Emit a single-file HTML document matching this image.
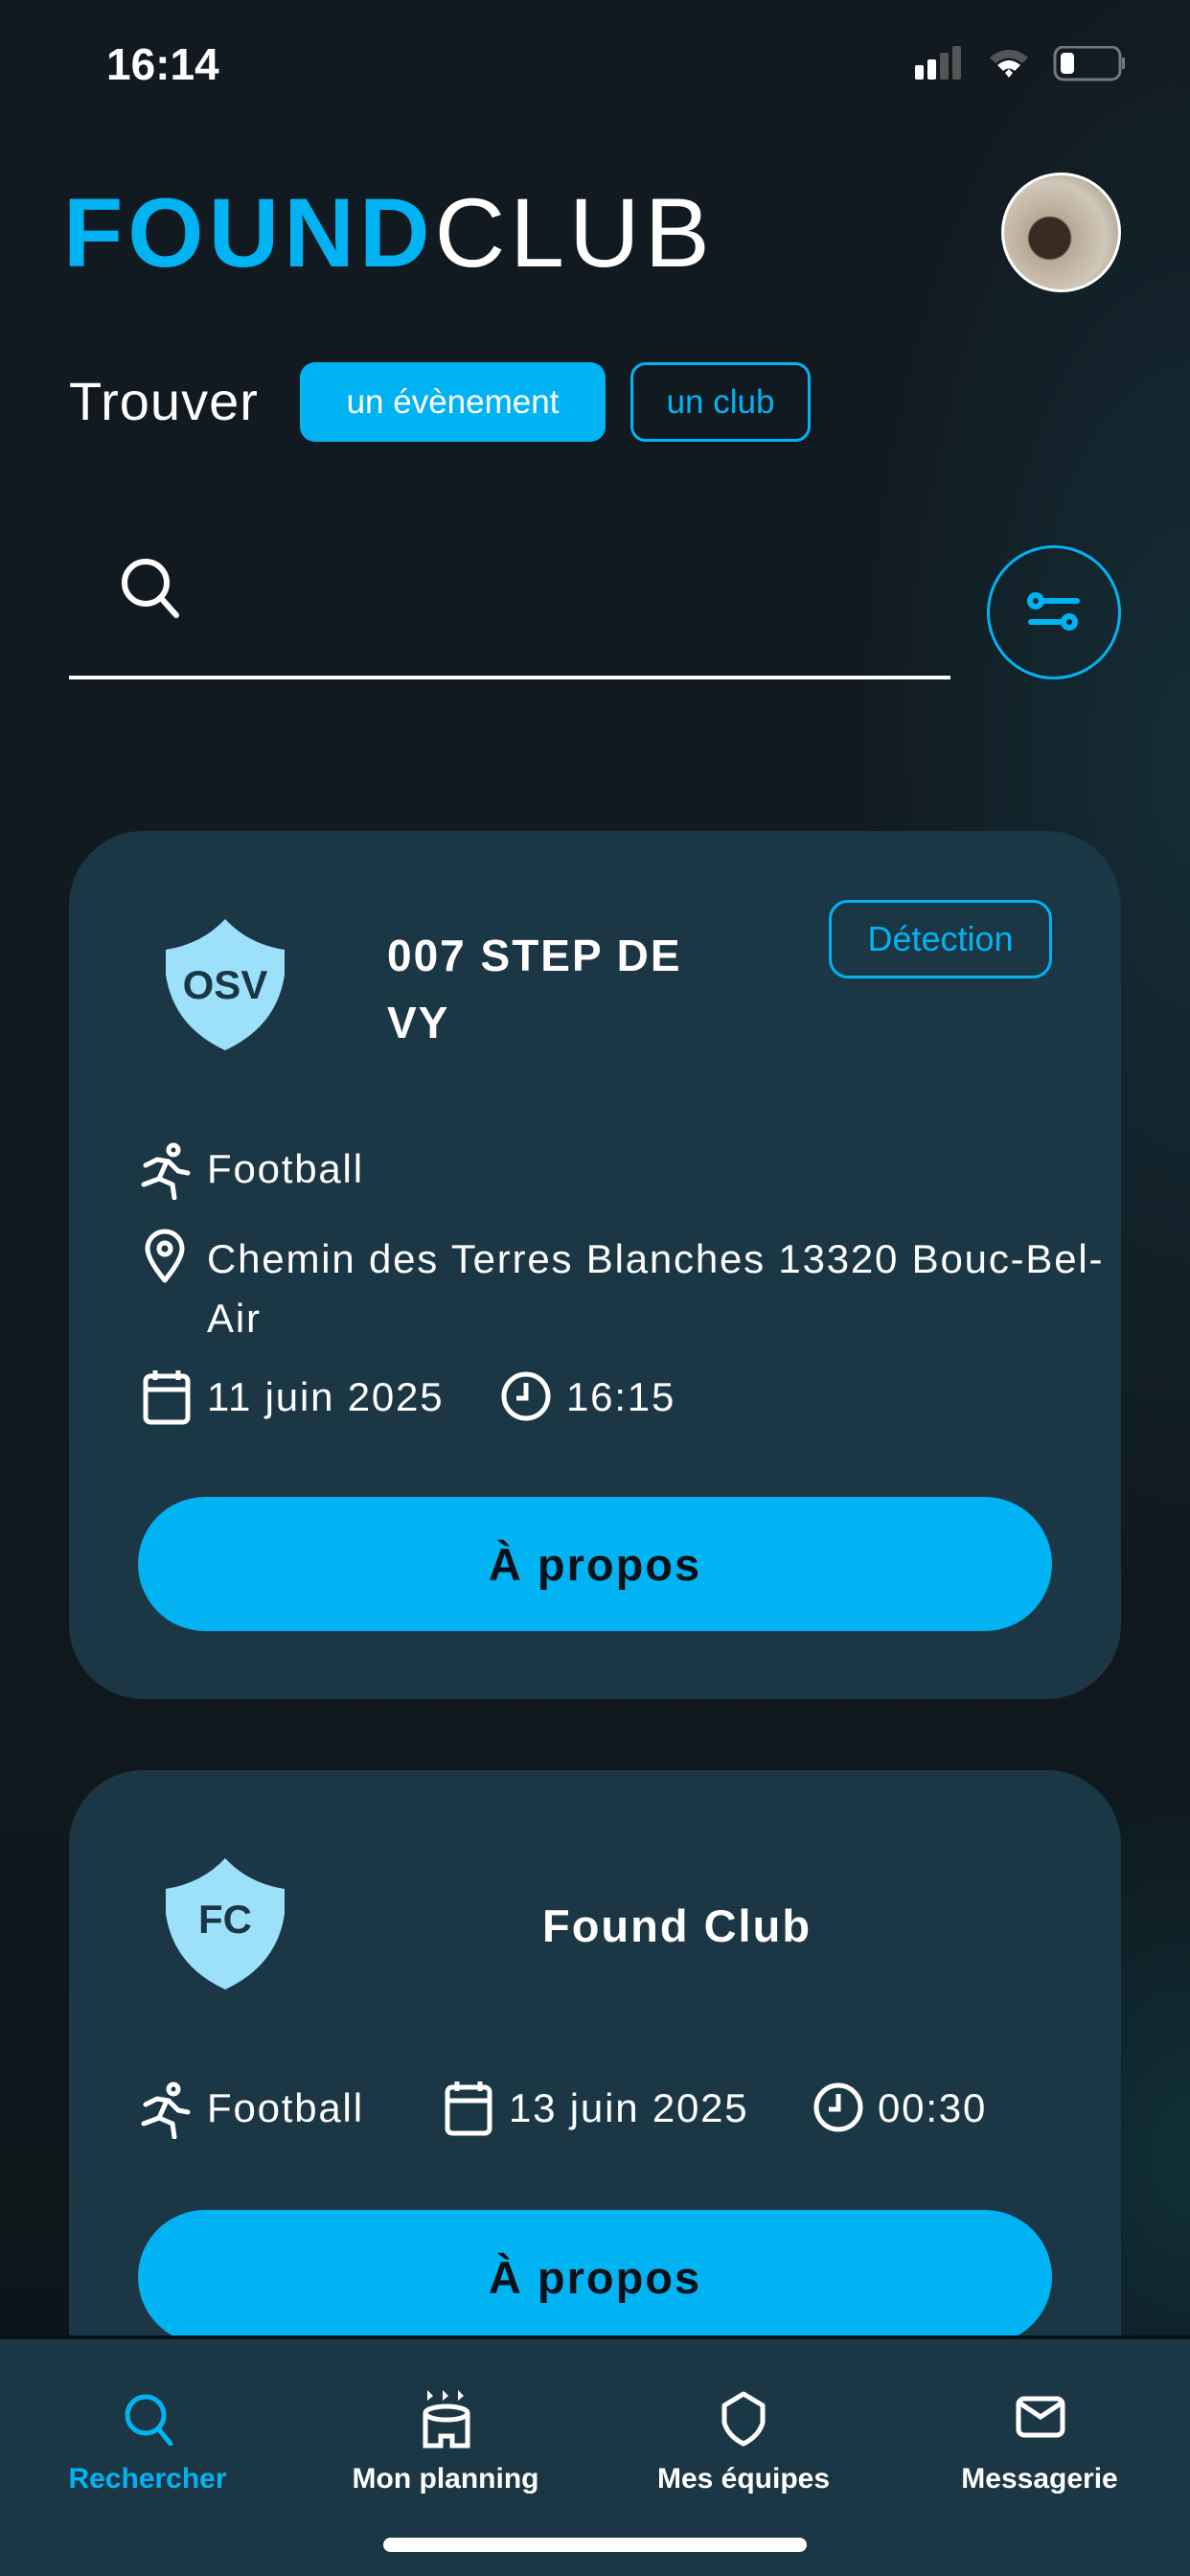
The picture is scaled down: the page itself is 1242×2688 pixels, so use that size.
<!DOCTYPE html>
<html><head><meta charset="utf-8">
<style>
*{margin:0;padding:0;box-sizing:border-box}
body{width:1242px;height:2688px;overflow:hidden;position:relative;font-family:"Liberation Sans",sans-serif;color:#fff;
background:radial-gradient(ellipse 500px 1200px at 1242px 800px,#142d36 0%,rgba(17,26,33,0) 70%),radial-gradient(ellipse 400px 600px at 1242px 2250px,#103038 0%,rgba(17,26,33,0) 70%),linear-gradient(180deg,#111a21 0%,#111a20 50%,#0c1418 100%);}
.a{position:absolute}
.card{position:absolute;left:72px;width:1098px;background:#1b3745;border-radius:78px}
.btn{position:absolute;left:72px;width:954px;height:140px;border-radius:70px;background:#02b3f3;color:#061018;font-weight:bold;font-size:47px;letter-spacing:2px;display:flex;align-items:center;justify-content:center}
.t42{font-size:42px;white-space:nowrap;letter-spacing:1.8px}
.tab{position:absolute;top:2570px;font-size:30px;font-weight:bold;width:300px;text-align:center;margin-left:-150px}
</style></head><body>
<div class="a" style="left:111px;top:40px;font-size:46px;font-weight:bold">16:14</div>
<svg class="a" style="left:955px;top:48px" width="220" height="40" viewBox="0 0 220 40">
<rect x="0" y="20" width="9" height="15" rx="2" fill="#fff"/><rect x="13" y="14" width="9" height="21" rx="2" fill="#fff"/><rect x="26" y="7" width="9" height="28" rx="2" fill="#555"/><rect x="39" y="0" width="9" height="35" rx="2" fill="#555"/>
<path d="M78 12 Q98 -4 118 12 L112 18 Q98 7 84 18Z" fill="#555"/><path d="M86 20 Q98 10 110 20 L104 26 Q98 21 92 26Z" fill="#fff"/><path d="M94 28 L98 24 L102 28 L98 33Z" fill="#fff"/>
<rect x="146" y="1" width="68" height="34" rx="9" fill="none" stroke="#777" stroke-width="3"/><rect x="152" y="7" width="14" height="22" rx="4" fill="#fff"/><rect x="216" y="12" width="3" height="12" rx="1" fill="#777"/>
</svg>
<div class="a" style="left:66px;top:188px;font-size:102px;line-height:110px;letter-spacing:5px;white-space:nowrap"><span style="color:#02b3f3;font-weight:bold">FOUND</span><span style="font-weight:normal">CLUB</span></div>
<div class="a" style="left:1045px;top:180px;width:125px;height:125px;border-radius:50%;border:3px solid #fff;background:radial-gradient(circle at 40% 55%,#3a2a22 0 22%,#b9a996 24%,#d0c7b7 60%,#8d8478 100%)"></div>
<div class="a" style="left:72px;top:386px;font-size:56px;letter-spacing:1px">Trouver</div>
<div class="a" style="left:313px;top:378px;width:319px;height:83px;border-radius:16px;background:#02b3f3;font-size:35px;display:flex;align-items:center;justify-content:center">un évènement</div>
<div class="a" style="left:658px;top:378px;width:188px;height:83px;border-radius:16px;border:3px solid #02b3f3;color:#02b3f3;font-size:35px;display:flex;align-items:center;justify-content:center">un club</div>
<svg class="a" style="left:122px;top:578px" width="70" height="70" viewBox="0 0 70 70"><circle cx="30" cy="30" r="22" fill="none" stroke="#fff" stroke-width="6"/><path d="M46 46 L62 64" stroke="#fff" stroke-width="6" stroke-linecap="round"/></svg>
<div class="a" style="left:72px;top:705px;width:920px;height:4px;background:#fff"></div>
<div class="a" style="left:1030px;top:569px;width:140px;height:140px;border-radius:50%;border:3px solid #02b3f3"></div>
<svg class="a" style="left:1072px;top:617px" width="56" height="46" viewBox="0 0 56 46"><g stroke="#02b3f3" stroke-width="6" fill="none" stroke-linecap="round"><circle cx="9" cy="10" r="6"/><path d="M16 10 H52"/><circle cx="44" cy="32" r="6"/><path d="M4 32 H37"/></g></svg>

<div class="card" style="top:867px;height:906px"></div>
<svg class="a" style="left:171px;top:959px" width="128" height="137" viewBox="0 0 128 137"><path d="M64 0 Q88 26 126 32 L126 58 Q118 112 64 137 Q10 112 2 58 L2 32 Q40 26 64 0Z" fill="#9de0fa"/><text x="64" y="83" text-anchor="middle" font-family="Liberation Sans" font-weight="bold" font-size="42" fill="#1b3745">OSV</text></svg>
<div class="a" style="left:404px;top:962px;font-size:46px;letter-spacing:2px;font-weight:bold;line-height:70px">007 STEP DE<br>VY</div>
<div class="a" style="left:865px;top:939px;width:233px;height:82px;border-radius:20px;border:3px solid #02b3f3;color:#02b3f3;font-size:36px;display:flex;align-items:center;justify-content:center">Détection</div>
<svg class="a" style="left:146px;top:1192px" width="54" height="60" viewBox="0 0 54 60"><g stroke="#fff" stroke-width="5" fill="none" stroke-linecap="round" stroke-linejoin="round"><circle cx="35" cy="8" r="5"/><path d="M6 24 L18 18 L30 20 L40 30 L50 32"/><path d="M28 20 L20 38 L4 44"/><path d="M20 38 L34 44 L36 58"/></g></svg>
<div class="a t42" style="left:216px;top:1196px">Football</div>
<svg class="a" style="left:150px;top:1282px" width="44" height="58" viewBox="0 0 44 58"><path d="M22 54 Q4 32 4 21 A18 18 0 0 1 40 21 Q40 32 22 54Z" fill="none" stroke="#fff" stroke-width="5" stroke-linejoin="round"/><circle cx="22" cy="21" r="6" fill="none" stroke="#fff" stroke-width="5"/></svg>
<div class="a t42" style="left:216px;top:1283px;line-height:62px">Chemin des Terres Blanches 13320 Bouc-Bel-<br>Air</div>
<svg class="a" style="left:148px;top:1428px" width="52" height="60" viewBox="0 0 52 60"><g stroke="#fff" stroke-width="5" fill="none"><rect x="4" y="8" width="44" height="48" rx="5"/><path d="M4 22 H48 M14 2 V12 M38 2 V12"/></g></svg>
<div class="a t42" style="left:216px;top:1434px">11 juin 2025</div>
<svg class="a" style="left:522px;top:1430px" width="54" height="54" viewBox="0 0 54 54"><circle cx="27" cy="27" r="23" fill="none" stroke="#fff" stroke-width="5"/><path d="M27 13 V29 H17" fill="none" stroke="#fff" stroke-width="5"/></svg>
<div class="a t42" style="left:591px;top:1434px">16:15</div>
<div class="btn" style="left:144px;top:1562px">À propos</div>

<div class="card" style="top:1847px;height:800px"></div>
<svg class="a" style="left:171px;top:1939px" width="128" height="137" viewBox="0 0 128 137"><path d="M64 0 Q88 26 126 32 L126 58 Q118 112 64 137 Q10 112 2 58 L2 32 Q40 26 64 0Z" fill="#9de0fa"/><text x="64" y="78" text-anchor="middle" font-family="Liberation Sans" font-weight="bold" font-size="42" fill="#1b3745">FC</text></svg>
<div class="a" style="left:566px;top:1982px;font-size:47px;letter-spacing:2px;font-weight:bold">Found Club</div>
<svg class="a" style="left:146px;top:2172px" width="54" height="60" viewBox="0 0 54 60"><g stroke="#fff" stroke-width="5" fill="none" stroke-linecap="round" stroke-linejoin="round"><circle cx="35" cy="8" r="5"/><path d="M6 24 L18 18 L30 20 L40 30 L50 32"/><path d="M28 20 L20 38 L4 44"/><path d="M20 38 L34 44 L36 58"/></g></svg>
<div class="a t42" style="left:216px;top:2176px">Football</div>
<svg class="a" style="left:463px;top:2170px" width="52" height="60" viewBox="0 0 52 60"><g stroke="#fff" stroke-width="5" fill="none"><rect x="4" y="8" width="44" height="48" rx="5"/><path d="M4 22 H48 M14 2 V12 M38 2 V12"/></g></svg>
<div class="a t42" style="left:531px;top:2176px">13 juin 2025</div>
<svg class="a" style="left:848px;top:2172px" width="54" height="54" viewBox="0 0 54 54"><circle cx="27" cy="27" r="23" fill="none" stroke="#fff" stroke-width="5"/><path d="M27 13 V29 H17" fill="none" stroke="#fff" stroke-width="5"/></svg>
<div class="a t42" style="left:916px;top:2176px">00:30</div>
<div class="btn" style="left:144px;top:2306px">À propos</div>

<div class="a" style="left:0;top:2437px;width:1242px;height:251px;background:#1b3745;border-top:4px solid #05121a"></div>
<svg class="a" style="left:128px;top:2496px" width="56" height="56" viewBox="0 0 56 56"><circle cx="24" cy="24" r="19" fill="none" stroke="#02b3f3" stroke-width="5"/><path d="M37 38 L50 54" stroke="#02b3f3" stroke-width="5" stroke-linecap="round"/></svg>
<svg class="a" style="left:436px;top:2492px" width="60" height="64" viewBox="0 0 60 64"><path d="M10 2 L16 8 L10 13Z M26 2 L32 8 L26 13Z M42 2 L48 8 L42 13Z" fill="#fff"/><g stroke="#fff" stroke-width="5" fill="none"><ellipse cx="30" cy="26" rx="22" ry="7"/><path d="M8 26 V60 H24 V50 H36 V60 H52 V26"/></g></svg>
<svg class="a" style="left:752px;top:2494px" width="48" height="60" viewBox="0 0 48 60"><path d="M24 4 L44 16 V34 Q40 48 24 56 Q8 48 4 34 V16Z" fill="none" stroke="#fff" stroke-width="5" stroke-linejoin="round"/></svg>
<svg class="a" style="left:1060px;top:2500px" width="52" height="44" viewBox="0 0 52 44"><rect x="3" y="3" width="46" height="38" rx="6" fill="none" stroke="#fff" stroke-width="5"/><path d="M5 8 L26 22 L47 8" fill="none" stroke="#fff" stroke-width="5"/></svg>
<div class="tab" style="left:154px;color:#02b3f3">Rechercher</div>
<div class="tab" style="left:465px">Mon planning</div>
<div class="tab" style="left:776px">Mes équipes</div>
<div class="tab" style="left:1085px">Messagerie</div>
<div class="a" style="left:400px;top:2648px;width:442px;height:15px;border-radius:8px;background:#fff"></div>
</body></html>
